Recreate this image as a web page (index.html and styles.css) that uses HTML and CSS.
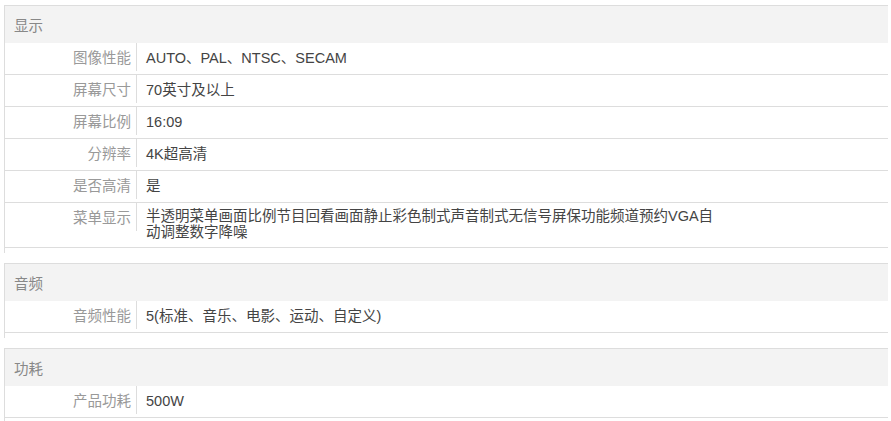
FILE: index.html
```html
<!DOCTYPE html>
<html lang="zh-CN">
<head>
<meta charset="utf-8">
<title>规格参数</title>
<link rel="stylesheet" href="styles.css">
</head>
<body>
<div class="specs">
  <section class="group">
    <h3 class="group-title">显示</h3>
    <div class="row"><div class="label">图像性能</div><div class="value">AUTO、PAL、NTSC、SECAM</div></div>
    <div class="row"><div class="label">屏幕尺寸</div><div class="value">70英寸及以上</div></div>
    <div class="row"><div class="label">屏幕比例</div><div class="value">16:09</div></div>
    <div class="row"><div class="label">分辨率</div><div class="value">4K超高清</div></div>
    <div class="row"><div class="label">是否高清</div><div class="value">是</div></div>
    <div class="row"><div class="label">菜单显示</div><div class="value">半透明菜单画面比例节目回看画面静止彩色制式声音制式无信号屏保功能频道预约VGA自动调整数字降噪</div></div>
  </section>
  <section class="group">
    <h3 class="group-title">音频</h3>
    <div class="row"><div class="label">音频性能</div><div class="value">5(标准、音乐、电影、运动、自定义)</div></div>
  </section>
  <section class="group">
    <h3 class="group-title">功耗</h3>
    <div class="row"><div class="label">产品功耗</div><div class="value">500W</div></div>
  </section>
</div>
</body>
</html>
```
FILE: styles.css
```css
html, body {
  margin: 0;
  padding: 0;
  background: #fff;
}
body {
  font-family: "Liberation Sans", Arial, "Noto Sans CJK SC", sans-serif;
  font-size: 14.5px;
  color: #444;
}
.specs {
  padding: 5px 3px 0 4px;
}
.group {
  border-left: 1px solid #ddd;
  border-top: 1px solid #ddd;
  padding-bottom: 5px;
  margin-bottom: 10px;
}
.group-title {
  margin: 0;
  box-sizing: border-box;
  height: 37px;
  padding: 3px 9px 0;
  line-height: 34px;
  font-size: 14.5px;
  font-weight: normal;
  color: #888;
  background: #f3f3f3;
}
.row {
  display: flex;
  min-height: 31px;
  border-bottom: 1px solid #ddd;
}
.label {
  flex: 0 0 auto;
  align-self: flex-start;
  box-sizing: border-box;
  width: 132px;
  height: 28px;
  padding: 3px 5px 0 0;
  line-height: 25px;
  text-align: right;
  color: #999;
  border-right: 1px solid #ddd;
}
.value {
  align-self: center;
  max-width: 572px;
  padding: 5px 9px 7px;
  line-height: 16px;
  color: #444;
}
```
